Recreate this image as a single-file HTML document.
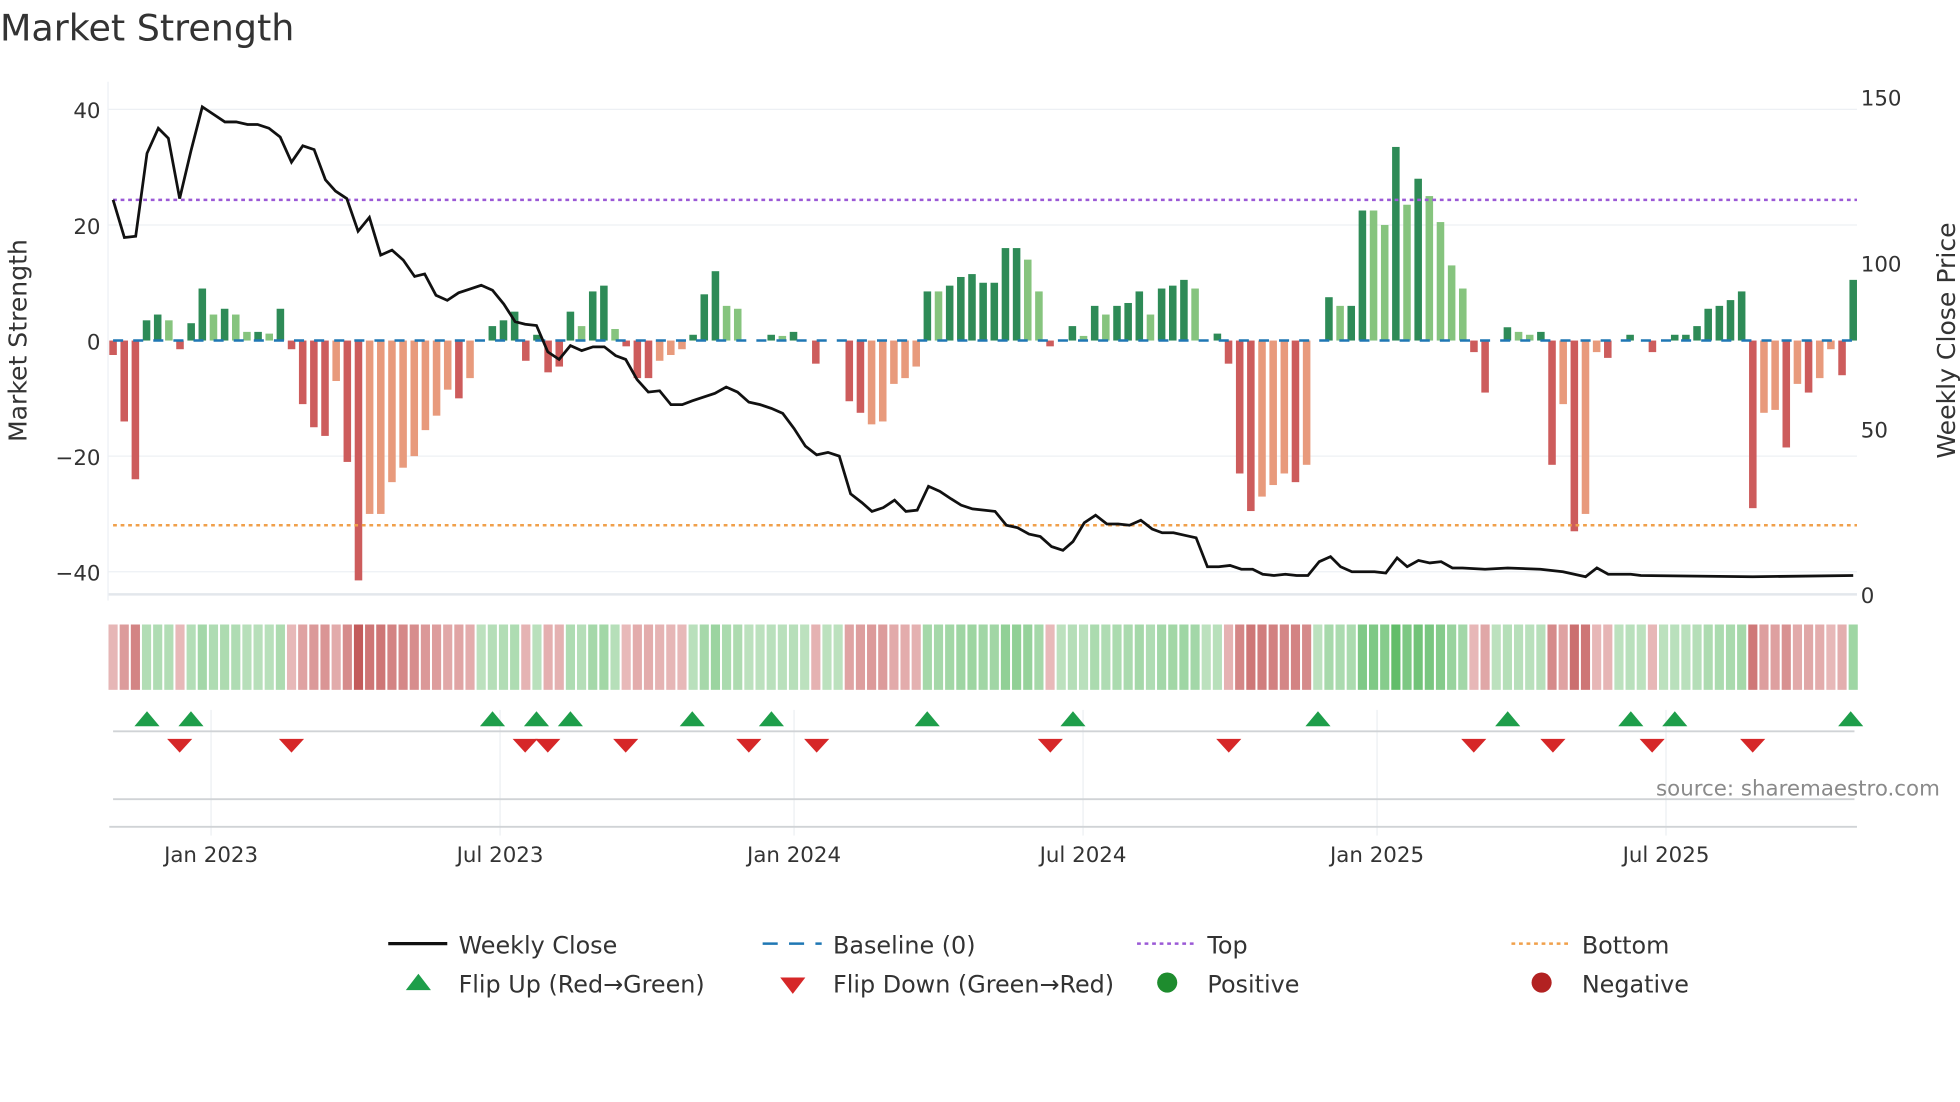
<!DOCTYPE html>
<html><head><meta charset="utf-8"><style>
html,body{margin:0;padding:0;background:#fff;width:1960px;height:1102px;overflow:hidden}
svg{display:block}
text{font-family:"DejaVu Sans","Liberation Sans",sans-serif;fill:#333}
</style></head><body>
<svg id="s" width="1960" height="1102" viewBox="0 0 1560 877" xmlns="http://www.w3.org/2000/svg">
<text x="0" y="32" font-size="29">Market Strength</text>
<g stroke="#edf0f4" stroke-width="1">
<line x1="86" y1="87" x2="1478" y2="87"/><line x1="86" y1="179" x2="1478" y2="179"/>
<line x1="86" y1="363" x2="1478" y2="363"/><line x1="86" y1="455" x2="1478" y2="455"/>
<line x1="86" y1="473" x2="1478" y2="473" stroke="#e3e7ec" stroke-width="2"/>
<line x1="86" y1="65" x2="86" y2="478"/>
</g>
<g font-size="17" text-anchor="end">
<text x="80" y="94">40</text><text x="80" y="186">20</text><text x="80" y="278">0</text>
<text x="80" y="370">−20</text><text x="80" y="462">−40</text>
</g>
<g font-size="17">
<text x="1481" y="84">150</text><text x="1481" y="216">100</text><text x="1481" y="348">50</text><text x="1481" y="480">0</text>
</g>
<text transform="translate(21,271) rotate(-90)" font-size="20" text-anchor="middle">Market Strength</text>
<text transform="translate(1556,271) rotate(-90)" font-size="20" text-anchor="middle">Weekly Close Price</text>
<g id="bars"></g>
<line x1="90" y1="159" x2="1478" y2="159" stroke="#9b59d6" stroke-width="2" stroke-dasharray="3,3"/>
<line x1="90" y1="418" x2="1478" y2="418" stroke="#f0a04b" stroke-width="2" stroke-dasharray="3,3"/>
<line x1="90" y1="271" x2="1478" y2="271" stroke="#1f77b4" stroke-width="2" stroke-dasharray="8,8"/>
<polyline id="close" fill="none" stroke="#111" stroke-width="2.2"/>
<g id="heat"></g>
<g stroke="#eceff2" stroke-width="1">
<line x1="168" y1="565" x2="168" y2="665"/><line x1="398" y1="565" x2="398" y2="665"/><line x1="632" y1="565" x2="632" y2="665"/>
<line x1="862" y1="565" x2="862" y2="665"/><line x1="1096" y1="565" x2="1096" y2="665"/><line x1="1326" y1="565" x2="1326" y2="665"/>
</g>
<line x1="90" y1="582" x2="1476" y2="582" stroke="#d0d3d6" stroke-width="1.5"/>
<line x1="90" y1="636" x2="1476" y2="636" stroke="#d0d3d6" stroke-width="1.5"/>
<line x1="87" y1="658" x2="1478" y2="658" stroke="#d0d3d6" stroke-width="1.5"/>
<g id="marks"></g>
<text x="1544" y="633" font-size="17" text-anchor="end" style="fill:#8a8a8a">source: sharemaestro.com</text>
<g font-size="17" text-anchor="middle">
<text x="168" y="686">Jan 2023</text><text x="398" y="686">Jul 2023</text><text x="632" y="686">Jan 2024</text>
<text x="862" y="686">Jul 2024</text><text x="1096" y="686">Jan 2025</text><text x="1326" y="686">Jul 2025</text>
</g>
<g font-size="19">
<line x1="309" y1="751" x2="356" y2="751" stroke="#111" stroke-width="2.5"/><text x="365" y="759">Weekly Close</text>
<line x1="607" y1="751" x2="654" y2="751" stroke="#1f77b4" stroke-width="2" stroke-dasharray="12,9"/><text x="663" y="759">Baseline (0)</text>
<line x1="905" y1="751" x2="952" y2="751" stroke="#9b59d6" stroke-width="2" stroke-dasharray="3,3"/><text x="961" y="759">Top</text>
<line x1="1203" y1="751" x2="1250" y2="751" stroke="#f0a04b" stroke-width="2" stroke-dasharray="3,3"/><text x="1259" y="759">Bottom</text>
<polygon points="323,788 333,775 343,788" fill="#1e9e4a"/><text x="365" y="790">Flip Up (Red→Green)</text>
<polygon points="621,778 641,778 631,791" fill="#d62728"/><text x="663" y="790">Flip Down (Green→Red)</text>
<circle cx="929" cy="782" r="8" fill="#1e8c2e"/><text x="961" y="790">Positive</text>
<circle cx="1227" cy="782" r="8" fill="#b22222"/><text x="1259" y="790">Negative</text>
</g>
</svg>
<script>
var V=[[-2.5,0],[-14,0],[-24,0],[3.5,0],[4.5,0],[3.5,1],[-1.5,0],[3,0],[9,0],[4.5,1],[5.5,0],[4.5,1],[1.5,1],[1.5,0],[1.2,1],[5.5,0],[-1.5,0],[-11,0],[-15,0],[-16.5,0],[-7,1],[-21,0],[-41.5,0],[-30,1],[-30,1],[-24.5,1],[-22,1],[-20,1],[-15.5,1],[-13,1],[-8.5,1],[-10,0],[-6.5,1],[0,0],[2.5,0],[3.5,0],[5,0],[-3.5,0],[1,0],[-5.5,0],[-4.5,0],[5,0],[2.5,1],[8.5,0],[9.5,0],[2,1],[-1,0],[-6.5,0],[-6.5,0],[-3.5,1],[-2.5,1],[-1.5,1],[1,0],[8,0],[12,0],[6,1],[5.5,1],[0,0],[0,0],[1,0],[0.8,1],[1.5,0],[0,0],[-4,0],[0,0],[0,0],[-10.5,0],[-12.5,0],[-14.5,1],[-14,1],[-7.5,1],[-6.5,1],[-4.5,1],[8.5,0],[8.5,1],[9.5,0],[11,0],[11.5,0],[10,0],[10,0],[16,0],[16,0],[14,1],[8.5,1],[-1,0],[0,0],[2.5,0],[0.8,1],[6,0],[4.5,1],[6,0],[6.5,0],[8.5,0],[4.5,1],[9,0],[9.5,0],[10.5,0],[9,1],[0,0],[1.2,0],[-4,0],[-23,0],[-29.5,0],[-27,1],[-25,1],[-23,1],[-24.5,0],[-21.5,1],[0,0],[7.5,0],[6,1],[6,0],[22.5,0],[22.5,1],[20,1],[33.5,0],[23.5,1],[28,0],[25,1],[20.5,1],[13,1],[9,1],[-2,0],[-9,0],[0,0],[2.3,0],[1.5,1],[1,1],[1.5,0],[-21.5,0],[-11,1],[-33,0],[-30,1],[-2,1],[-3,0],[0,0],[1,0],[0,0],[-2,0],[0,0],[1,0],[1,0],[2.5,0],[5.5,0],[6,0],[7,0],[8.5,0],[-29,0],[-12.5,1],[-12,1],[-18.5,0],[-7.5,1],[-9,0],[-6.5,1],[-1.5,1],[-6,0],[10.5,0]];
var ns="http://www.w3.org/2000/svg",b=document.getElementById('bars'),h=document.getElementById('heat');
function el(t,a,p){var e=document.createElementNS(ns,t);for(var k in a)e.setAttribute(k,a[k]);p.appendChild(e);return e}
var n=V.length,x0=90,dx=(1475-90)/(n-1);
V.forEach(function(d,i){var v=d[0],x=x0+i*dx;
 if(v!=0){var y=271-v*4.6,c=v>0?(d[1]?'#86c47e':'#2e8b57'):(d[1]?'#e89a7c':'#cd5c5c');
 el('rect',{x:x-3,y:Math.min(y,271),width:6,height:Math.abs(y-271),fill:c},b);}
 var t=Math.min(1,Math.abs(v)/42),col;
 if(v>=0){t=0.25+0.75*t;col='rgb('+Math.round(225-150*t)+','+Math.round(240-60*t)+','+Math.round(225-140*t)+')';}
 else{t=0.25+0.75*t;col='rgb('+Math.round(245-50*t)+','+Math.round(220-130*t)+','+Math.round(220-130*t)+')';}
 el('rect',{x:x-dx/2+0.8,y:497,width:dx-1.6,height:52,fill:col},h);
});
var P="90,159 99,189 108,188 117,122 126,102 134,110 143,158 152,120 161,85 170,91 179,97 188,97 197,99 205,99 214,102 223,109 232,129 241,116 250,119 259,143 267,152 276,158 285,184 294,173 303,203 312,199 321,207 330,220 338,218 347,235 356,239 365,233 374,230 383,227 392,231 401,242 410,256 418,258 427,259 436,280 445,286 454,275 463,279 472,276 481,276 490,283 498,286 507,302 516,312 525,311 534,322 543,322 551,319 560,316 569,313 578,308 587,312 596,320 605,322 614,325 623,329 632,341 641,355 650,362 659,360 668,363 677,393 686,400 694,407 703,404 712,398 721,407 730,406 739,387 748,391 757,397 765,402 774,405 783,406 792,407 801,418 810,420 819,425 828,427 837,435 846,438 854,431 863,416 872,410 881,417 890,417 899,418 908,414 917,421 925,424 934,424 943,426 952,428 961,451 970,451 979,450 988,453 997,453 1005,457 1014,458 1023,457 1032,458 1041,458 1050,447 1059,443 1067,451 1076,455 1085,455 1094,455 1103,456 1112,444 1120,451 1129,446 1138,448 1147,447 1156,452 1164,452 1182,453 1200,452 1226,453 1244,455 1262,459 1271,452 1280,457 1298,457 1306,458 1395,459 1475,458";
document.getElementById('close').setAttribute('points',P);
var m=document.getElementById('marks');
[117,152,392,427,454,551,614,738,854,1049,1200,1298,1333,1473].forEach(function(x){el('polygon',{points:(x-10)+',578 '+x+',566 '+(x+10)+',578',fill:'#1e9e4a'},m)});
[143,232,418,436,498,596,650,836,978,1173,1236,1315,1395].forEach(function(x){el('polygon',{points:(x-10)+',588 '+(x+10)+',588 '+x+',599',fill:'#d62728'},m)});
</script>
</body></html>
